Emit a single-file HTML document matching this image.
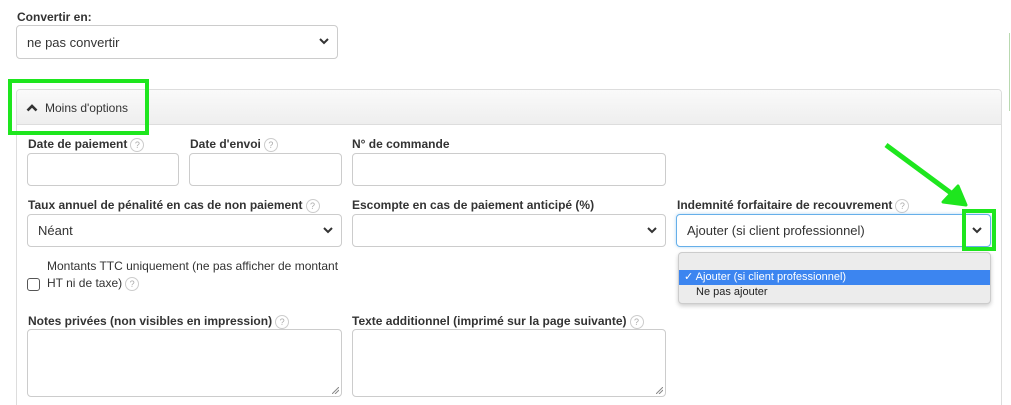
<!DOCTYPE html>
<html><head><meta charset="utf-8"><style>
*{box-sizing:border-box;margin:0;padding:0}
html,body{width:1011px;height:405px;overflow:hidden}
body{background:#fff;font-family:"Liberation Sans",Arial,sans-serif;color:#333;position:relative}
.a{position:absolute}
.lb{position:absolute;font-size:12px;font-weight:bold;color:#333;white-space:nowrap}
.q{display:inline-block;width:14px;height:14px;border:1px solid #ccc;border-radius:50%;font-size:9px;font-weight:normal;color:#aaa;text-align:center;line-height:12px;vertical-align:middle;margin-left:3px}
.in{position:absolute;border:1px solid #ccc;border-radius:4px;background:#fff;font-size:13px;color:#333;padding-left:10px;display:flex;align-items:center}
.ch{position:absolute;right:8px;top:50%;margin-top:-5px}
.gr{position:absolute;right:2px;bottom:2px}
</style></head><body>
<div class="lb" style="left:17px;top:10px">Convertir en:</div>
<div class="in" style="left:16px;top:25px;width:322px;height:34px">ne pas convertir<svg class="ch" width="10" height="8" viewBox="0 0 10 8"><path d="M1 2l4 4 4-4" stroke="#333" stroke-width="2" fill="none"/></svg></div>

<div class="a" style="left:1009px;top:33px;width:1px;height:78px;background:#b9d9b0"></div>

<div class="a" style="left:16px;top:89px;width:986px;height:330px;border:1px solid #ddd;border-radius:4px 4px 0 0"></div>
<div class="a" style="left:17px;top:90px;width:984px;height:35px;background:linear-gradient(#fafafa,#eeeeee);border-bottom:1px solid #ddd;border-radius:3px 3px 0 0"></div>
<svg class="a" style="left:26px;top:103px" width="12" height="9" viewBox="0 0 12 9"><path d="M1.5 7.5L6 3l4.5 4.5" stroke="#333" stroke-width="2.6" fill="none"/></svg>
<div class="a" style="left:45px;top:101px;font-size:12px;color:#333">Moins d'options</div>
<div class="a" style="left:8px;top:79px;width:141px;height:56px;border:4px solid #1ee61e"></div>

<div class="lb" style="left:28px;top:137px">Date de paiement<span class="q">?</span></div>
<div class="lb" style="left:190px;top:137px">Date d'envoi<span class="q">?</span></div>
<div class="lb" style="left:352px;top:137px">N° de commande</div>
<div class="in" style="left:27px;top:153px;width:152px;height:33px"></div>
<div class="in" style="left:189px;top:153px;width:153px;height:33px"></div>
<div class="in" style="left:352px;top:153px;width:314px;height:33px"></div>

<div class="lb" style="left:28px;top:198px">Taux annuel de pénalité en cas de non paiement<span class="q">?</span></div>
<div class="lb" style="left:352px;top:198px">Escompte en cas de paiement anticipé (%)</div>
<div class="lb" style="left:677px;top:198px">Indemnité forfaitaire de recouvrement<span class="q">?</span></div>
<div class="in" style="left:27px;top:214px;width:315px;height:33px">Néant<svg class="ch" width="10" height="8" viewBox="0 0 10 8"><path d="M1 2l4 4 4-4" stroke="#333" stroke-width="2" fill="none"/></svg></div>
<div class="in" style="left:352px;top:214px;width:314px;height:33px"><svg class="ch" width="10" height="8" viewBox="0 0 10 8"><path d="M1 2l4 4 4-4" stroke="#333" stroke-width="2" fill="none"/></svg></div>
<div class="in" style="left:676px;top:214px;width:315px;height:33px;border-color:#66afe9;box-shadow:0 0 3px rgba(102,175,233,.5)">Ajouter (si client professionnel)<svg class="ch" width="10" height="8" viewBox="0 0 10 8"><path d="M1 2l4 4 4-4" stroke="#333" stroke-width="2" fill="none"/></svg></div>
<div class="a" style="left:962px;top:209px;width:34px;height:42px;border:4px solid #1ee61e"></div>

<svg class="a" style="left:0;top:0" width="1011" height="405"><path d="M886 145L955 196" stroke="#1ee61e" stroke-width="5"/><path d="M966 205L943 202L958 186Z" fill="#1ee61e" stroke="#1ee61e" stroke-width="3" stroke-linejoin="round"/></svg>

<div class="a" style="left:47px;top:258px;font-size:12px;color:#333;line-height:17px">Montants TTC uniquement (ne pas afficher de montant<br>HT ni de taxe)<span class="q">?</span></div>
<div class="a" style="left:27px;top:278px;width:13px;height:13px;border:1px solid #555;border-radius:3px"></div>

<div class="a" style="left:678px;top:252px;width:313px;height:52px;background:#ececec;border:1px solid #ccc;border-radius:4px;box-shadow:0 2px 4px rgba(0,0,0,.2)"></div>
<div class="a" style="left:679px;top:270px;width:311px;height:15px;background:#3c85f0;color:#fff;font-size:11px;line-height:15px;padding-left:5px">✓ Ajouter (si client professionnel)</div>
<div class="a" style="left:696px;top:285px;font-size:11px;color:#222;line-height:15px">Ne pas ajouter</div>

<div class="lb" style="left:28px;top:314px">Notes privées (non visibles en impression)<span class="q">?</span></div>
<div class="lb" style="left:352px;top:314px">Texte additionnel (imprimé sur la page suivante)<span class="q">?</span></div>
<div class="in" style="left:27px;top:329px;width:315px;height:68px"><svg class="gr" width="7" height="7"><path d="M0 7L7 0M3 7L7 3" stroke="#888" stroke-width="1"/></svg></div>
<div class="in" style="left:352px;top:329px;width:314px;height:68px"><svg class="gr" width="7" height="7"><path d="M0 7L7 0M3 7L7 3" stroke="#888" stroke-width="1"/></svg></div>
</body></html>
